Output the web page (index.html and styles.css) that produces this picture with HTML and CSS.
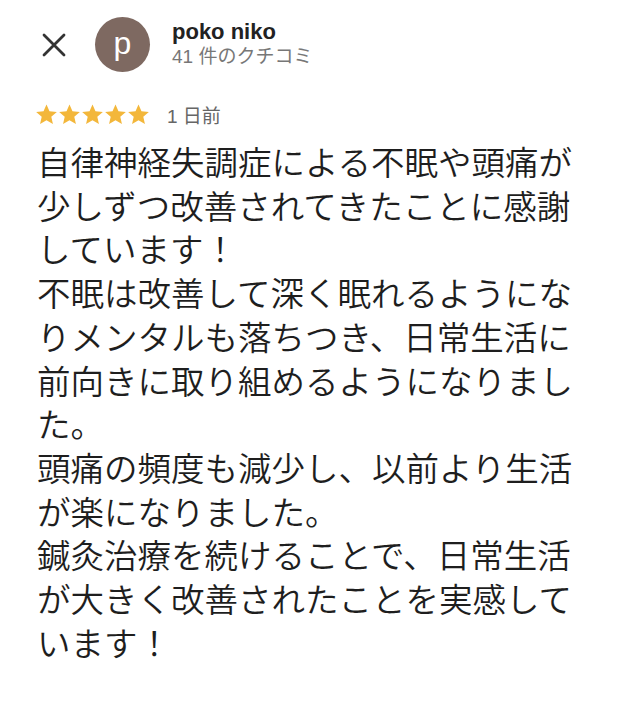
FILE: index.html
```html
<!DOCTYPE html>
<html lang="ja">
<head>
    <meta charset="UTF-8">
    <meta name="viewport" content="width=device-width, initial-scale=1.0">
    <title>poko niko のクチコミ</title>
    <link rel="stylesheet" href="styles.css">
</head>
<body>
    <div class="review">
        <div class="header">
            <button class="close" aria-label="閉じる">
                <svg width="24" height="24" viewBox="0 0 24 24">
                    <path d="M2 2 L22 22 M22 2 L2 22" stroke="#333" stroke-width="2.8" stroke-linecap="round" fill="none"/>
                </svg>
            </button>
            <div class="avatar">p</div>
            <div class="meta">
                <div class="name">poko niko</div>
                <div class="count">41 件のクチコミ</div>
            </div>
        </div>

        <div class="rating">
            <div class="stars">
                <svg class="star" viewBox="0 0 24 24"><path d="M12 1.5l3.1 7.1 7.7.7-5.8 5.1 1.7 7.6L12 18.1 5.3 22l1.7-7.6L1.2 9.3l7.7-.7z"/></svg>
                <svg class="star" viewBox="0 0 24 24"><path d="M12 1.5l3.1 7.1 7.7.7-5.8 5.1 1.7 7.6L12 18.1 5.3 22l1.7-7.6L1.2 9.3l7.7-.7z"/></svg>
                <svg class="star" viewBox="0 0 24 24"><path d="M12 1.5l3.1 7.1 7.7.7-5.8 5.1 1.7 7.6L12 18.1 5.3 22l1.7-7.6L1.2 9.3l7.7-.7z"/></svg>
                <svg class="star" viewBox="0 0 24 24"><path d="M12 1.5l3.1 7.1 7.7.7-5.8 5.1 1.7 7.6L12 18.1 5.3 22l1.7-7.6L1.2 9.3l7.7-.7z"/></svg>
                <svg class="star" viewBox="0 0 24 24"><path d="M12 1.5l3.1 7.1 7.7.7-5.8 5.1 1.7 7.6L12 18.1 5.3 22l1.7-7.6L1.2 9.3l7.7-.7z"/></svg>
            </div>
            <span class="date">1 日前</span>
        </div>

        <p class="text">自律神経失調症による不眠や頭痛が少しずつ改善されてきたことに感謝しています！<br>不眠は改善して深く眠れるようになりメンタルも落ちつき、日常生活に前向きに取り組めるようになりました。<br>頭痛の頻度も減少し、以前より生活が楽になりました。<br>鍼灸治療を続けることで、日常生活が大きく改善されたことを実感しています！</p>
    </div>
</body>
</html>
```

FILE: styles.css
```css
* {
    margin: 0;
    padding: 0;
    box-sizing: border-box;
}

body {
    background: #fff;
    color: #222;
    font-family: "Liberation Sans", "Noto Sans CJK JP", sans-serif;
}

.review {
    padding: 17px 0 0 0;
}

.header {
    display: flex;
    align-items: center;
    padding-left: 42px;
}

.close {
    background: none;
    border: none;
    width: 24px;
    height: 24px;
    margin-right: 29px;
    display: flex;
}

.avatar {
    width: 55px;
    height: 55px;
    border-radius: 50%;
    background: #7e6961;
    color: #fff;
    font-size: 32px;
    display: flex;
    align-items: center;
    justify-content: center;
    line-height: 1;
    padding-bottom: 4px;
    margin-right: 22px;
}

.meta {
    display: flex;
    flex-direction: column;
    margin-top: -1px;
}

.name {
    font-size: 22px;
    font-weight: 700;
    line-height: 26px;
    color: #222;
}

.count {
    font-size: 19px;
    line-height: 24px;
    color: #777;
}

.rating {
    display: flex;
    align-items: center;
    padding-left: 35px;
    margin-top: 30px;
    height: 24px;
}

.stars {
    display: flex;
    margin-right: 17px;
}

.star {
    width: 23px;
    height: 23px;
    fill: #f3b73b;
}

.date {
    font-size: 19px;
    color: #666;
}

.text {
    font-family: "Noto Sans CJK JP", sans-serif;
    font-weight: 350;
    font-size: 33.5px;
    line-height: 43.7px;
    color: #1e1e1e;
    padding-left: 37px;
    width: 590px;
    margin-top: 13px;
}
```
